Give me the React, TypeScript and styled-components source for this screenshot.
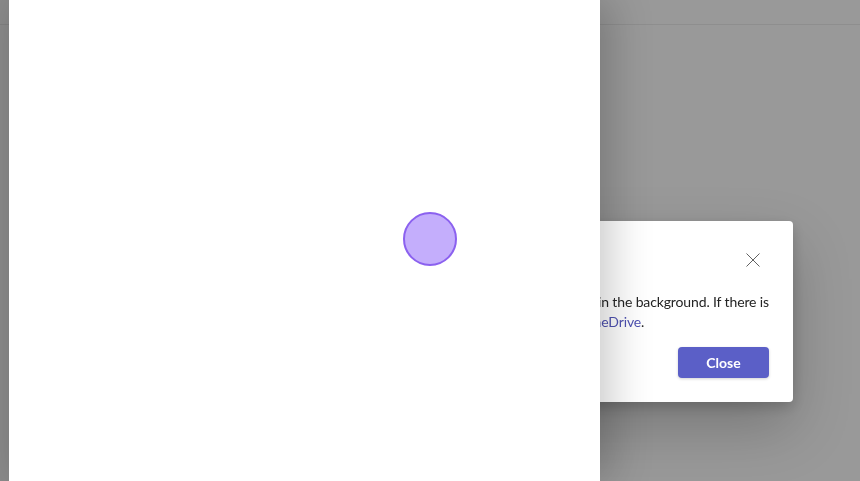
import React from 'react'
import styled, { createGlobalStyle } from 'styled-components'

const GlobalStyle = createGlobalStyle`
  html, body {
    margin: 0;
    padding: 0;
    height: 100%;
    overflow: hidden;
  }
  body {
    font-family: "Segoe UI", Lato, "Noto Sans", sans-serif;
    background: #999999;
  }
  #root {
    height: 100%;
  }
`

const Page = styled.div`
  display: flex;
  height: 100vh;
  background: #999999;
`

const Gutter = styled.div`
  width: 9px;
  flex-shrink: 0;
  display: flex;
  flex-direction: column;
  background: #8a8a8a;
`

const HeaderStrip = styled.div<{ $tone: string }>`
  height: 24px;
  flex-shrink: 0;
  border-bottom: 1px solid ${({ $tone }) => $tone};
`

const SidePanel = styled.div`
  position: relative;
  z-index: 2;
  width: 591px;
  flex-shrink: 0;
  background: #ffffff;
  box-shadow: 10px 0 40px rgba(0, 0, 0, 0.22);
  display: flex;
  align-items: center;
  justify-content: center;
`

const Spinner = styled.div`
  width: 50px;
  height: 50px;
  border-radius: 50%;
  background: #c4aefc;
  border: 2px solid #8b61ef;
  margin-left: 250px;
  margin-top: -3px;
`

const Backdrop = styled.div`
  flex: 1;
  display: flex;
  flex-direction: column;
  background: #999999;
`

const Dialog = styled.div`
  position: fixed;
  z-index: 1;
  top: 221px;
  left: 334px;
  width: 459px;
  box-sizing: border-box;
  padding: 23px 24px 24px;
  background: #ffffff;
  border-radius: 4px;
  box-shadow: 0 25px 58px rgba(0, 0, 0, 0.22), 0 5px 14px rgba(0, 0, 0, 0.18);
  display: flex;
  flex-direction: column;
`

const DialogHeader = styled.div`
  display: flex;
  align-items: center;
  justify-content: space-between;
  height: 32px;
`

const DialogTitle = styled.h2`
  margin: 0;
  font-size: 18px;
  font-weight: 700;
  color: #242424;
`

const CloseIcon = styled.button`
  width: 32px;
  height: 32px;
  padding: 0;
  border: none;
  background: transparent;
  display: flex;
  align-items: center;
  justify-content: center;
  color: #616161;
`

const Body = styled.div`
  margin-top: 16px;
  font-size: 14px;
  line-height: 20px;
  letter-spacing: -0.13px;
  color: #242424;
`

const Line = styled.div<{ $align?: 'left' | 'right' }>`
  white-space: nowrap;
  text-align: ${({ $align }) => $align || 'left'};
`

const Link = styled.a`
  color: #4f52b2;
  text-decoration: none;
`

const Footer = styled.div`
  display: flex;
  justify-content: flex-end;
  margin-top: 15px;
`

const PrimaryButton = styled.button`
  width: 91px;
  height: 31px;
  border: none;
  border-radius: 4px;
  background: #5b5fc7;
  color: #ffffff;
  font-family: inherit;
  font-size: 14px;
  font-weight: 700;
  box-shadow: 0 1px 3px rgba(0, 0, 0, 0.18);
`

export default function App() {
  return (
    <>
      <GlobalStyle />
      <Page>
        <Gutter>
          <HeaderStrip $tone="#808080" />
        </Gutter>
        <SidePanel>
          <Spinner />
        </SidePanel>
        <Backdrop>
          <HeaderStrip $tone="#8e8e8e" />
        </Backdrop>
      </Page>
      <Dialog>
        <DialogHeader>
          <DialogTitle>Uploading files</DialogTitle>
          <CloseIcon aria-label="Close">
            <svg width="14" height="14" viewBox="0 0 14 14">
              <path d="M0.5 0.5 L13.5 13.5 M13.5 0.5 L0.5 13.5" stroke="currentColor" strokeWidth="1" fill="none" />
            </svg>
          </CloseIcon>
        </DialogHeader>
        <Body>
          <Line $align="right">Your files will keep uploading in the background. If there is</Line>
          <Line>
            a problem, you can find all of them in <Link href="#">OneDrive</Link>.
          </Line>
        </Body>
        <Footer>
          <PrimaryButton>Close</PrimaryButton>
        </Footer>
      </Dialog>
    </>
  )
}
